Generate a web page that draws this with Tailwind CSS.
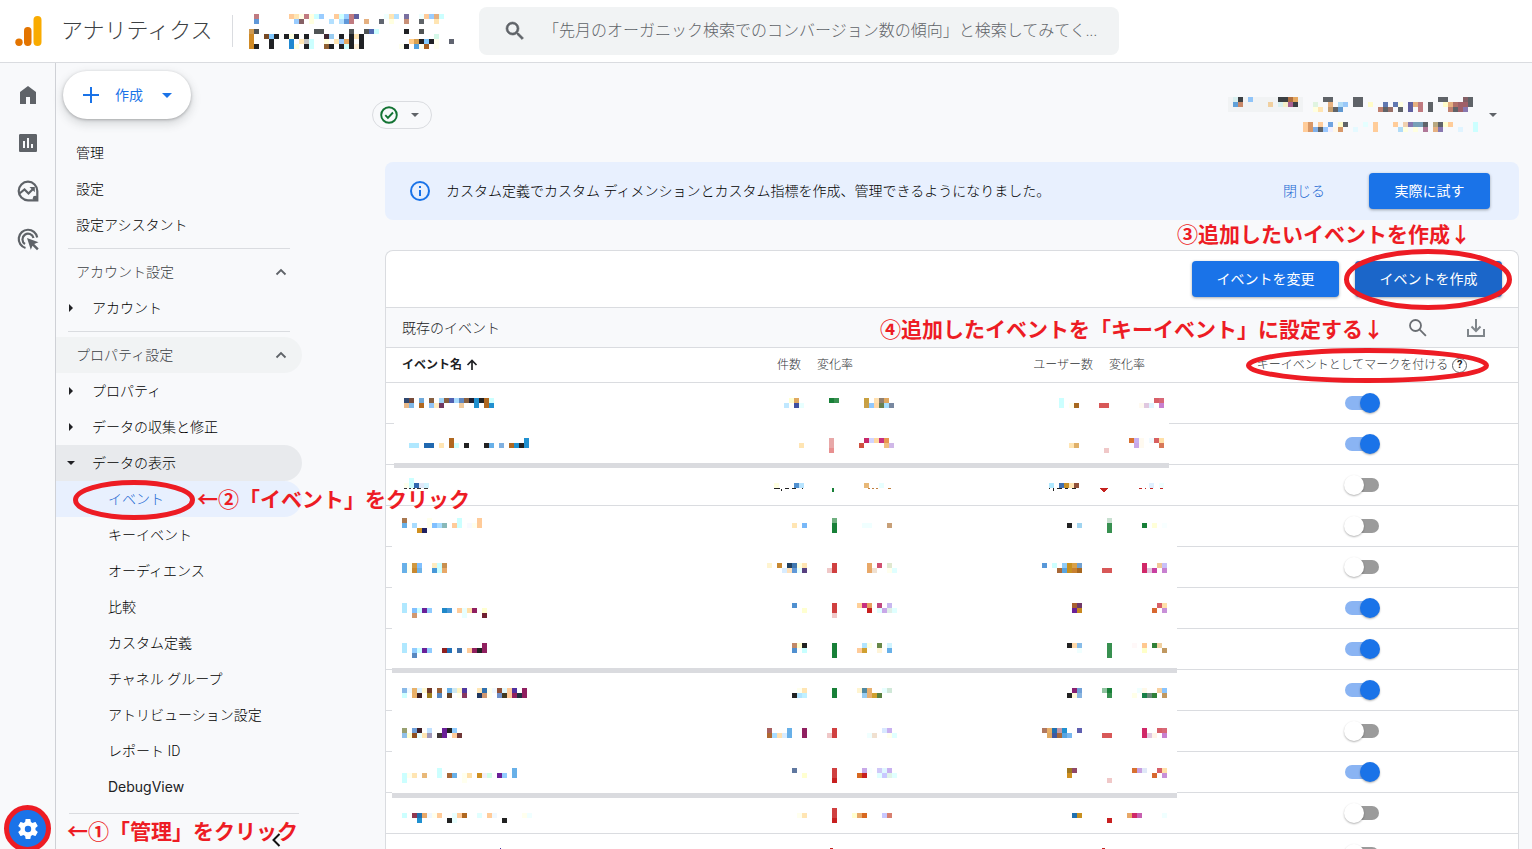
<!DOCTYPE html>
<html lang="ja">
<head>
<meta charset="utf-8">
<title>アナリティクス</title>
<script src="https://cdn.jsdelivr.net/npm/@tailwindcss/browser@4"></script>
</head>
<body class="flex h-screen flex-col overflow-hidden bg-[#f8f9fb] font-['Roboto','Noto_Sans_CJK_JP',sans-serif] text-sm text-[#202124]">

<header class="flex h-[63px] shrink-0 items-center border-b border-[#dadce0] bg-white">
  <svg class="ml-[14px] size-8 shrink-0" viewBox="0 0 32 32" aria-hidden="true">
    <rect x="19.500" y="1" width="8" height="30" rx="4" fill="#f9ab00"/>
    <rect x="10" y="12" width="7.500" height="19" rx="3.700" fill="#e37400"/>
    <circle cx="5" cy="27.300" r="3.700" fill="#e37400"/>
  </svg>
  <h1 class="ml-[15px] w-[155px] text-[22px] leading-8 font-light whitespace-nowrap text-[#3c4043]">アナリティクス</h1>
  <div class="ml-4 h-8 w-px bg-[#dadce0]"></div>
  <svg id="account-mosaic" class="ml-4 h-[35px] w-[206px] shrink-0" viewBox="249 13 206 35" shape-rendering="crispEdges" aria-hidden="true"></svg>
  <label class="ml-6 flex h-12 w-[640px] items-center rounded-lg bg-[#f1f3f4]">
    <svg class="ml-6 size-6 shrink-0 fill-[#5f6368] stroke-[#5f6368]" viewBox="0 0 24 24" stroke-width=".6" aria-hidden="true"><path d="M15.500 14h-.79l-.28-.27A6.470 6.470 0 0 0 16 9.500 6.500 6.500 0 1 0 9.500 16c1.610 0 3.090-.59 4.230-1.570l.27.28v.79l5 4.990L20.490 19l-4.990-5zm-6 0C7.010 14 5 11.990 5 9.500S7.010 5 9.500 5 14 7.010 14 9.500 11.990 14 9.500 14z"/></svg>
    <input type="search" aria-label="検索" class="ml-4 min-w-0 flex-1 bg-transparent text-base font-light outline-none placeholder:text-[#5f6368]" placeholder="「先月のオーガニック検索でのコンバージョン数の傾向」と検索してみてく...">
  </label>
</header>

<div class="flex min-h-0 flex-1">
  <nav class="relative z-20 flex w-14 shrink-0 flex-col items-center border-r border-[#cfd1d6] fill-[#5f6368]" aria-label="メイン">
    <a href="#" aria-label="ホーム" class="mt-5"><svg class="size-6" viewBox="0 0 24 24"><path d="M4 21V9l8-6 8 6v12h-6v-7h-4v7z"/></svg></a>
    <a href="#" aria-label="レポート" class="mt-6"><svg class="size-6" viewBox="0 0 24 24"><path d="M19.500 3h-15C3.500 3 3 3.500 3 4.500v15c0 1 .5 1.500 1.500 1.500h15c1 0 1.500-.5 1.500-1.500v-15c0-1-.5-1.500-1.500-1.500zM9 17H7v-7h2v7zm4 0h-2V7h2v10zm4 0h-2v-4h2v4z"/></svg></a>
    <a href="#" aria-label="探索" class="mt-6"><svg class="size-6" viewBox="0 0 24 24"><path fill="none" stroke="#5f6368" stroke-width="2.200" d="M12 21.300a9.300 9.300 0 1 1 9.300-9.300v9.300z"/><path fill="none" stroke="#5f6368" stroke-width="2.200" d="M3.500 14.500 8.500 10.500l4 4 5-5"/><path d="M13.500 8h5.300v5.300z"/><circle cx="19.200" cy="19.200" r="2.400"/></svg></a>
    <a href="#" aria-label="広告" class="mt-6"><svg class="size-6" viewBox="0 0 24 24"><g fill="none" stroke="#5f6368" stroke-width="2.200"><path d="M9.500 21A9.300 9.300 0 1 1 21.200 10.500"/><path d="M9 17A5.600 5.600 0 1 1 17.500 11"/></g><path d="M11 11l11.500 4.200-4.300 1.900 4.500 4.500-1.700 1.700-4.500-4.500-1.700 4z"/></svg></a>
    <a href="#" aria-label="管理" class="mt-auto mb-[-3px] flex size-[47px] items-center justify-center rounded-full border-[5px] border-[#ed1c24] bg-[#1a73e8]">
      <svg class="size-6 fill-white" viewBox="0 0 24 24"><path d="M19.430 12.980c.04-.32.07-.64.07-.98s-.03-.66-.07-.98l2.110-1.650c.19-.15.24-.42.12-.64l-2-3.460c-.12-.22-.39-.3-.61-.22l-2.490 1c-.52-.4-1.080-.73-1.690-.98l-.38-2.650A.49.490 0 0 0 14 2h-4c-.25 0-.46.180-.49.420l-.38 2.650c-.61.250-1.170.590-1.690.980l-2.490-1c-.23-.09-.49 0-.61.220l-2 3.460c-.13.220-.07.490.12.640l2.110 1.650c-.04.320-.07.650-.07.980s.03.660.07.980l-2.110 1.650c-.19.150-.24.420-.12.640l2 3.460c.12.220.39.300.61.220l2.490-1c.52.400 1.080.730 1.690.980l.38 2.650c.03.240.24.420.49.420h4c.25 0 .46-.18.49-.42l.38-2.650c.61-.25 1.170-.59 1.690-.98l2.490 1c.23.090.49 0 .61-.22l2-3.460c.12-.22.07-.49-.12-.64l-2.110-1.650zM12 15.200a3.200 3.200 0 1 1 0-6.400 3.200 3.200 0 0 1 0 6.400z"/></svg>
    </a>
  </nav>

  <aside class="relative z-10 w-[316px] shrink-0">
    <button class="mt-2 ml-[7px] flex h-12 w-32 items-center rounded-full bg-white text-[#1a73e8] shadow-[0_1px_3px_rgba(60,64,67,.35),0_4px_8px_2px_rgba(60,64,67,.15)]">
      <svg class="ml-4 size-6" viewBox="0 0 24 24" aria-hidden="true"><path d="M12 4v16M4 12h16" stroke="currentColor" stroke-width="2"/></svg>
      <span class="ml-3">作成</span>
      <svg class="ml-3 size-6" viewBox="0 0 24 24" aria-hidden="true"><path fill="currentColor" d="M7 10l5 5 5-5z"/></svg>
    </button>
    <ul class="mt-4 w-[246px] leading-9 font-light text-black [&_a]:block [&_a]:rounded-r-full">
      <li><a href="#" class="pl-5">管理</a></li>
      <li><a href="#" class="pl-5">設定</a></li>
      <li><a href="#" class="pl-5">設定アシスタント</a></li>
      <li class="my-[5px] mr-3 ml-3 h-px bg-[#dadce0]"></li>
      <li><button class="flex h-9 w-full items-center justify-between rounded-r-full pr-[13px] pl-5 text-[#3c4043]">アカウント設定<svg class="size-4" viewBox="0 0 16 16"><path d="M3.500 10.500 8 6l4.500 4.500" fill="none" stroke="#5f6368" stroke-width="1.800"/></svg></button></li>
      <li><a href="#" class="relative pl-9 before:absolute before:top-[14px] before:left-[13px] before:border-4 before:border-r-0 before:border-transparent before:border-l-[#202124]">アカウント</a></li>
      <li class="my-[5px] mr-3 ml-3 h-px bg-[#dadce0]"></li>
      <li><button class="flex h-9 w-full items-center justify-between rounded-r-full bg-[#f1f3f4] pr-[13px] pl-5 text-[#3c4043]">プロパティ設定<svg class="size-4" viewBox="0 0 16 16"><path d="M3.500 10.500 8 6l4.500 4.500" fill="none" stroke="#5f6368" stroke-width="1.800"/></svg></button></li>
      <li><a href="#" class="relative pl-9 before:absolute before:top-[14px] before:left-[13px] before:border-4 before:border-r-0 before:border-transparent before:border-l-[#202124]">プロパティ</a></li>
      <li><a href="#" class="relative pl-9 before:absolute before:top-[14px] before:left-[13px] before:border-4 before:border-r-0 before:border-transparent before:border-l-[#202124]">データの収集と修正</a></li>
      <li><a href="#" class="relative bg-[#e8eaed] pl-9 before:absolute before:top-4 before:left-[11px] before:border-4 before:border-b-0 before:border-transparent before:border-t-[#202124]">データの表示</a></li>
      <li class="relative">
        <a href="#" class="bg-[#e8f0fe] pl-[52px] text-[#1967d2]">イベント</a>
        <svg class="absolute top-[-1px] left-[17px] h-10 w-[122px]" viewBox="0 0 122 40" aria-hidden="true"><ellipse cx="61" cy="20" rx="58.500" ry="17.500" fill="none" stroke="#ed1c24" stroke-width="5"/></svg>
        <strong class="absolute top-px left-[141px] text-[21px] font-bold whitespace-nowrap text-[#ed1c24]">←②「イベント」をクリック</strong>
      </li>
      <li><a href="#" class="pl-[52px]">キーイベント</a></li>
      <li><a href="#" class="pl-[52px]">オーディエンス</a></li>
      <li><a href="#" class="pl-[52px]">比較</a></li>
      <li><a href="#" class="pl-[52px]">カスタム定義</a></li>
      <li><a href="#" class="pl-[52px]">チャネル グループ</a></li>
      <li><a href="#" class="pl-[52px]">アトリビューション設定</a></li>
      <li><a href="#" class="pl-[52px]">レポート ID</a></li>
      <li><a href="#" class="pl-[52px] font-['Inter',sans-serif] font-normal text-[#202124]">DebugView</a></li>
    </ul>
    <div class="relative mt-2 ml-[13px] w-[230px] border-t border-[#dadce0]">
      <strong class="absolute top-0 left-[-2px] text-[21px] leading-9 whitespace-nowrap text-[#ed1c24]">←①「管理」をクリック</strong>
      <button class="absolute top-[18px] left-[201px]" aria-label="メニューを閉じる"><svg class="h-4 w-3" viewBox="0 0 12 16"><path d="M9.500 2 3.500 8l6 6" fill="none" stroke="#111" stroke-width="2"/></svg></button>
    </div>
  </aside>

  <main class="min-w-0 flex-1">
    <div class="flex h-[99px] items-center justify-between pt-[5px] pr-[35px]">
      <button class="flex h-7 w-[60px] items-center rounded-full border border-[#dadce0]" aria-label="データの状態">
        <svg class="ml-[6px] size-5" viewBox="0 0 20 20"><circle cx="10" cy="10" r="7.800" fill="none" stroke="#137333" stroke-width="1.900"/><path d="M6.300 10.200 8.900 12.800 14 7.500" fill="none" stroke="#137333" stroke-width="1.900"/></svg>
        <span class="ml-3 border-x-4 border-t-4 border-transparent border-t-[#5f6368]"></span>
      </button>
      <button class="flex items-center" aria-label="プロパティを選択">
        <svg id="property-mosaic" class="h-9 w-[251px]" viewBox="1228 97 251 36" shape-rendering="crispEdges"><path fill="#f1f3f4" d="M1228 97h75v15h-75z"/></svg>
        <span class="ml-[10px] border-x-4 border-t-4 border-transparent border-t-[#5f6368]"></span>
      </button>
    </div>

    <div class="px-[13px]">
      <section class="relative flex h-[58px] items-center rounded-lg bg-[#e8f0fe] pr-[29px] pl-[23px]">
        <svg class="size-6" viewBox="0 0 24 24" aria-hidden="true"><circle cx="12" cy="12" r="9" fill="none" stroke="#1a73e8" stroke-width="2"/><path d="M11 7h2v2h-2zM11 11h2v6h-2z" fill="#1a73e8"/></svg>
        <p class="ml-[14px] leading-5 font-light text-black">カスタム定義でカスタム ディメンションとカスタム指標を作成、管理できるようになりました。</p>
        <button class="mr-[44px] ml-auto font-light text-[#1967d2]">閉じる</button>
        <button class="h-9 w-[121px] rounded bg-[#1a73e8] text-white shadow-[0_1px_3px_rgba(60,64,67,.45)]">実際に試す</button>
        <strong class="absolute top-[57px] right-[48px] text-[21px] leading-8 whitespace-nowrap text-[#ed1c24]">③追加したいイベントを作成↓</strong>
      </section>

      <section class="mt-[30px] rounded-t-lg border border-b-0 border-[#dadce0] bg-white">
        <div class="flex h-[57px] items-center justify-end gap-4 border-b border-[#dadce0] pr-4">
          <button class="h-9 w-[147px] rounded bg-[#1a73e8] text-white shadow-[0_1px_3px_rgba(60,64,67,.45)]">イベントを変更</button>
          <div class="relative">
            <button class="h-9 w-[147px] rounded bg-[#1b66c9] text-white shadow-[0_1px_3px_rgba(60,64,67,.45)]">イベントを作成</button>
            <svg class="absolute top-[-12px] left-[-11px] z-10 h-[61px] w-[168px]" viewBox="0 0 168 61" aria-hidden="true"><ellipse cx="84" cy="30.500" rx="81.500" ry="28" fill="none" stroke="#ed1c24" stroke-width="5"/></svg>
          </div>
        </div>
        <div class="relative flex h-10 items-center border-b border-[#dadce0] bg-[#f8f9fb] pr-[30px] pl-4 text-[#202124]">
          <h2 class="font-light">既存のイベント</h2>
          <strong class="absolute top-1 right-[134px] text-[21px] leading-9 whitespace-nowrap text-[#ed1c24]">④追加したイベントを「キーイベント」に設定する↓</strong>
          <button class="mr-[34px] ml-auto" aria-label="検索"><svg class="size-6" viewBox="0 0 24 24"><circle cx="9.500" cy="9.500" r="5.500" fill="none" stroke="#6a6e73" stroke-width="1.800"/><path d="m13.700 13.700 6.200 6.200" stroke="#6a6e73" stroke-width="1.800"/></svg></button>
          <button aria-label="ダウンロード"><svg class="size-6" viewBox="0 0 24 24"><path d="M4 13v7h16v-7M12 3v11M7.500 10.500 12 15l4.500-4.500" fill="none" stroke="#80868b" stroke-width="2"/></svg></button>
        </div>
        <div class="relative">
          <table class="w-full table-fixed border-separate border-spacing-0 [&_td]:border-b [&_td]:border-[#dadce0] [&_th]:border-b [&_th]:border-[#dadce0]">
            <thead>
              <tr class="h-[35px] text-xs leading-4 text-[#303336]">
                <th class="w-[302px] pl-4 text-left font-bold text-[#202124]"><span class="flex items-center gap-1">イベント名<svg class="size-3" viewBox="0 0 12 12"><path d="M6 11V2M1.500 6 6 1.500 10.500 6" fill="none" stroke="#202124" stroke-width="1.700"/></svg></span></th>
                <th class="w-[121px] pr-2 text-right font-light">件数</th>
                <th class="w-[172px] pl-2 text-left font-light">変化率</th>
                <th class="w-[120px] pr-2 text-right font-light">ユーザー数</th>
                <th class="w-[105px] pl-2 text-left font-light">変化率</th>
                <th class="font-light">
                  <span class="relative inline-flex items-center gap-1 align-middle">キーイベントとしてマークを付ける
                    <span class="flex size-[15px] items-center justify-center rounded-full border border-[#5f6368] text-[11px] font-bold text-[#202124]">?</span>
                    <svg class="absolute top-[-9px] left-[-11px] h-[35px] w-[243px]" viewBox="0 0 243 35" aria-hidden="true"><ellipse cx="121.500" cy="17.500" rx="119" ry="15" fill="none" stroke="#ed1c24" stroke-width="5"/></svg>
                  </span>
                </th>
              </tr>
            </thead>
            <tbody id="events"></tbody>
          </table>
          <svg id="table-mosaic" class="pointer-events-none absolute top-0 left-0 h-[501px] w-[800px]" viewBox="386 348 800 501" shape-rendering="crispEdges" aria-hidden="true">
            <path fill="#fff" d="M394 388h775v80H394zM392 508h785v290H392z"/>
            <path fill="#dadbdf" d="M394 463h775v5H394zM392 668h785v5H392zM392 793h785v5H392z"/>
          </svg>
        </div>
      </section>
    </div>
  </main>
</div>

<template id="event-row">
  <tr class="h-[41px]">
    <td></td><td></td><td></td><td></td><td></td>
    <td class="text-center"><input type="checkbox" role="switch" aria-label="キーイベントとしてマークを付ける" class="relative block mx-auto h-5 w-9 appearance-none before:absolute before:top-[3px] before:left-px before:h-[14px] before:w-[34px] before:rounded-full before:bg-[#9b9b9b] after:absolute after:top-0 after:left-0 after:size-5 after:rounded-full after:bg-white after:shadow-[0_1px_2px_rgba(0,0,0,.3)] checked:before:bg-[#8ab4f3] checked:after:left-4 checked:after:bg-[#1a73e8]"></td>
  </tr>
</template>

<script>
  const rowTemplate = document.getElementById('event-row');
  for (const flag of '110001110100') {
    const row = rowTemplate.content.cloneNode(true);
    row.querySelector('input').checked = flag === '1';
    document.getElementById('events').append(row);
  }

  // Pixelated blocks: [x, y, rows], rows parted by "/", each cell "column#colour" on a 5px grid.
  function mosaic(id, blocks) {
    const svg = document.getElementById(id);
    for (const [x, y, rows] of blocks) {
      rows.split('/').forEach((line, r) => {
        for (const cell of line.trim().split(' ').filter(Boolean)) {
          const [col, fill] = cell.split('#');
          const rect = document.createElementNS('http://www.w3.org/2000/svg', 'rect');
          rect.setAttribute('x', x + col * 5);
          rect.setAttribute('y', y + r * 5);
          rect.setAttribute('width', 5);
          rect.setAttribute('height', 5);
          rect.setAttribute('fill', '#' + fill);
          svg.append(rect);
        }
      });
    }
  }

  mosaic('account-mosaic', [[249, 13,
    '1#c07a80 8#ffcb99 9#ffe5b3 10#ffffe5 11#c07a80 12#ffffe0 13#ccffff 14#99ccff 17#ffcb99 18#ccffff 19#99ccff 20#c07a80 21#6060a0 27#efffff 28#ffe5b3 29#b3e0ff 31#7a70a0 34#eeffff 35#ffcb99 36#99ccff 37#e5b080 38#ccffff/' +
    '1#6098d8 9#99ccff 10#856065 12#ffffe0 16#b3e0ff 18#b3e0ff 19#6098d8 20#c07a80 23#e5b080 26#606570 28#ffffe0 31#c89078 34#606468 37#ffe5b3//' +
    '0#d09a50 1#505455 13#505455 14#505455 20#505455 23#505455 24#5068b0 25#ccffff 31#202124 34#505455/' +
    '0#d08a25 3#784a25 4#80c8ff 5#202124 7#202124 8#ffffe0 9#202124 11#202124 15#402830 16#99ccf0 18#202124 20#202124 21#ffe5b3 22#202124 37#d5f8e8/' +
    '0#d08a25 4#202124 8#2088d0 10#ffe5b3 11#c4c4c4 12#ccffff 15#ffffe0 17#ffe5b3 18#99ccff 19#e5a860 20#202124 22#202124 32#ffcb88 33#d8a050 34#202124 35#80c8ff 36#202124 37#ffffee 40#606470/' +
    '0#d08a25 1#202124 4#202124 8#2088d0 9#ffffe0 11#202124 12#ccffff 15#906030 16#202124 18#202124 19#ccffff 20#202124 21#fff0d8 22#202124 30#ffffee 31#202124 33#50a0e0 34#ffffee 35#a86020 37#ffffee']]);

  mosaic('property-mosaic', [[1228, 97,
    '1#d8f0f0 2#3c4043 4#90c4f8 10#3c4043 11#3c4043 12#b07040 13#e5a860 19#5f6368 20#5f6368 25#5f6368 26#5f6368 42#5f6368 43#5f6368 47#856065 48#5f6368/' +
    '1#60a0d8 2#c88868 8#f0d0a0 10#d8f0f0 11#f5efc8 12#a86090 13#3c4043 17#e0f4e0 20#e5b080 22#b0dcf8 23#99c8f8 25#5f6368 26#5f6368 28#fffcc8 31#6078b0 33#6078b0 34#ffffe0 36#6060a0 37#e5b080 38#c07a80 40#5f6368 43#fffcc8 44#e5b080 45#b07068 46#a06068 47#a06068 48#5f6368/' +
    '17#ffffe0 18#ffe5b3 20#c8a070 21#5f6368 22#6098d0 30#c08070 31#5f6368 32#987068 34#5f6368 36#6060a0 38#c07a80 40#5f6368 44#c08070 45#5f6368 46#a06068 47#8878b0'],
    [1228, 122,
    '15#ffcc99 16#d89868 18#ffcc99 20#70a4e0 22#fffcc8 23#5f6368 27#e5ffff 29#ffcc99 33#ffcc99 35#f0d0b0 36#8878b0 37#78a0b8 38#78a0b8 39#5f6368 41#b8a880 42#5f6368 43#ffffd0 44#ffcc99 49#ccffff/' +
    '15#ffcc99 16#d89868 17#80b0e8 18#5f6368 19#99c8ff 20#f0f0ff 21#fff8e8 22#d89868 25#e5faff 29#ffcc99 34#b0dcf8 35#ffffe0 37#ffffe0 39#b07898 41#e5b080 42#8878b0 46#e0f4ff 49#ccffff']]);

  mosaic('table-mosaic', [
    // Event names
    [404, 398, '0#304870 1#784a38 3#70a8d8 5#886040 7#a0d4f8 8#886040 9#5060b0 10#a8dcff 11#6088c0 12#886040 13#202030 14#2090d0 15#222222 16#b06820 17#ccffff/0#e8b888 1#80b8e8 3#b06820 5#90c4f8 6#ffecc0 7#703860 11#f0cca0 14#2090d0 16#b06820 17#2090d0'],
    [404, 438, '9#b06820 24#2090d0/1#b0e8ff 2#b0e8ff 4#2068b0 5#2068b0 7#ffe5b3 9#b06820 10#ccffff 12#222222 16#222222 17#68b0e8 19#80b0e0 21#b06820 22#2090d0 23#222222 24#2090d0'],
    [404, 478, '1#ccffff/0#ffffee 1#ccffff 2#3068b0 3#e0e8f8 4#d0f4ff'],
    [402, 518, '0#a87850 5#ffffee 11#ccffff 15#ffcb99/0#68b0e8 2#a8dcff 5#ffffee 6#80c0ff 7#a8dcff 8#88b8b8 10#ffcb99 11#ccffff 13#f8faff 14#ffffee 15#ffcb99/3#d09020 4#202060'],
    [402, 563, '0#68b0e8 1#ffffee 2#d09840 3#80c0ff 6#ffecc0 7#ccffff 8#c89050/0#68b0e8 1#ffffee 2#c88830 3#70b4e8 6#4898d8 7#ccffff 8#e8a868'],
    [402, 603, '0#b0e8ff/0#b0e8ff 2#80c0ff 3#ccffff 4#6a2098 5#90ccff 8#2088c8 9#4898d8 11#ffcb99 12#e8ffff 13#ffe0a8 14#902060 16#ffffd0/2#d09870 12#e8ffff 16#702030'],
    [402, 643, '0#b0e8ff 16#902060/0#b0e8ff 2#90ccff 3#ccffff 4#6a2098 5#90ccff 8#902020 9#2070b8 11#4070a8 13#ffcb99 14#902060 15#222222 16#902060/2#5888c0'],
    [402, 688, '0#88b8e8 1#f0faff 2#e8b068 3#d8f0ff 4#fff8d0 5#703828 7#986038 9#68b0e8 10#d0e8f0 11#fff4c0 12#5038a0 15#ffe5b3 16#3070b0 17#ffffee 18#f0f8ff 19#905038 20#e0f8ff 21#ffcb99 22#5030a0 24#902060/0#ccffff 2#e8b068 3#402020 5#a08020 7#5888c0 9#604028 11#fffff0 12#883860 15#203860 16#d09870 17#fffff0 19#7090c8 20#403820 21#ffcb99 22#902060 23#203040 24#902060'],
    [402, 728, '0#98a070 2#70a0d8 3#402028 5#c0e0ff 8#6a2098 9#222222 10#90ccff/0#90c0e8 1#ffffd0 2#905020 3#e8ffff 4#ffe5b3 5#a098b8 7#403838 8#6a2098 10#ffcb99 11#703838'],
    [402, 768, '7#ccffff 22#68b0e8/0#ccffff 1#ffffee 2#ffe5b3 4#e8b878 7#ccffff 9#a86838 10#68b0e8 12#ffffee 13#ffe0a8 15#d09020 16#f0f0f8 17#d0ffe8 19#6a2098 20#90ccff 22#68b0e8/0#ccffff 12#ffffee'],
    [402, 813, '0#ccffff 2#903850 3#2070b0 4#e8a868 5#f0f8ff 6#ffffee 7#ffcb99 10#e8ffff 11#ffcb99 12#b06820 15#e0ffff 17#ffcb99 18#f0f8ff 24#ffffee 25#f0ffff/3#2090d0 9#222222 10#e8ffff 20#222222'],
    // Counts and their change
    [784, 398, '1#ffffd0 2#e0a860 9#188038 10#389050 16#c8a040 18#ffe0b0 19#908070 20#e0a860/0#c0e8ff 2#4050a0 3#e8ffff 16#c8a048 17#90c8ff 18#ffd8a8 19#688050 20#a8e0ff 21#7888a0'],
    [784, 438, '9#e8a8a8 16#c82868 17#d0d4ff 18#ffd8a0 19#c83080 20#e89850/3#ffe5b3 9#e8a8a8 15#d05040 20#f0c080 21#d0b8e8/9#e89090'],
    [774, 483, '0#ffffe0 4#5090d0 5#b8e4ff 18#e8b878 21#e8ffff'],
    [767, 518, '13#70b080/5#ffe5b3 7#78b8f8 13#188038 19#f0ffff 20#f0ffff 24#c8a078/13#188038'],
    [767, 563, '0#fff4d0 2#c88830 4#204060 5#4078b0 6#ffffe0 7#ffe5b3 13#d04040 20#e8a868 22#d05070 24#e0e8d0/3#d8ecff 4#ffe0b8 5#6098d8 6#e8ffff 7#584080 12#f0c8c8 13#d04040 20#e8a868 21#f0e0d0 24#ffffee 25#e0ffff'],
    [767, 603, '5#5090d0 13#d04040 18#ffd098 19#c83080 20#e8a060 22#c04880 24#c8b8f0/7#ffffd0 13#d04040 20#c82020 22#e0ffff 23#c8a8e8 24#e0f0e8 25#e0ffff/13#f0c8c8'],
    [767, 643, '5#c08868 6#ffffd0 7#222222 13#188038 19#b0e4ff 20#ffffe0 22#688848 24#d0f4ff/5#5090d0 7#c8ffff 13#188038 18#ffcb99 19#d0a030 22#fff4d8 24#68b0e8/13#188038'],
    [767, 688, '6#ffffee 7#ffe5b3 13#188038 18#fff4d0 19#5088a0 20#e8b070 23#e8ffff 24#d0e8d8/5#222222 6#b0e4ff 7#c0f0ff 13#188038 19#98ccf0 20#e8b070 21#d0a030 22#588040'],
    [767, 728, '0#a86060 4#68b0e8 7#902060 13#d04040 23#d8e8ff 24#c8b0f0/0#b06830 1#a8dcff 2#ffe0b0 3#d8ecff 4#68b0e8 7#902060 12#f0c8c8 13#d04040 20#f0ffff 21#f0e0d0 24#ffffee 25#e0ffff'],
    [767, 768, '5#6078a0 13#d04040 19#c8a8e8 20#f8ffff 22#d0c8f8 23#e0f8ff 24#c8b0f0/7#ffffd0 13#d04040 18#d86820 19#c82020 22#e0ffff 23#c8c8ff 24#e0f4e8 25#e0ffff/13#c82020'],
    [767, 808, '13#d04040/6#ffffee 7#ffe5b3 13#d04040 17#ffffd0 18#e8a868 19#d86820 23#c8c8ff 24#d88070/13#c82020'],
    // Users and their change
    [1059, 398, '0#ccffff 19#d86068 20#d86878/0#ccffff 2#ffffee 3#a86820 8#d85858 9#d85858 16#fffaf0 17#e0c8e0 18#e0f4ff 20#c880d0'],
    [1059, 438, '14#d87030 15#c8b0f0 16#fffaf0 18#f0faff 19#d86060 20#ffe0a8/2#ffe5b3 3#e0b068 15#c8a8e8 16#fffaf0 20#d87858/9#f0c8c8'],
    [1049, 483, '0#b0e8ff 2#4070b0 3#c89028 4#ffe5b3 5#905038 20#e0f0ff 22#f0ffff'],
    [1042, 518, '13#c8e0d0/5#222222 7#a0d4f0 13#389050 20#188038 22#ffffd8 24#f8ffff/13#389050'],
    [1042, 563, '0#5898d8 2#ccffff 4#90ccf8 5#c89020 6#d8a048 7#70a0d0 20#d02868 23#f0c898 24#c8c0f8/3#a86838 4#58a4e0 5#c89020 6#c88030 7#a86820 12#d85858 13#d85858 20#d02868 21#e0c8e0 22#c840a0 24#c880d0'],
    [1042, 603, '6#a86030 7#703868 23#d86068 24#ffe0a8/6#6a2098 7#c88820 22#d86830 24#c890d8'],
    [1042, 643, '5#222222 6#ffd8a8 7#88bce8 13#389050 18#fff8f8 20#ffc890 22#308038 23#f0d0a0/7#f0ffff 13#389050 20#ffffc8 24#c09860/13#389050'],
    [1042, 688, '6#882070 7#70a0d8 12#90c4a0 13#188038 19#f0ffff 20#fff8e8 23#f8d0a0 24#88c4ff/5#222222 6#fff8d8 7#88b4e0 13#389050 18#ffffe8 20#188048 21#688878 22#308038 24#c09860'],
    [1042, 728, '0#b07860 1#e8b068 2#2070b0 3#c098a8 4#2090d0 7#6060b0 20#d02868 23#d86068 24#d86878/1#e0a860 2#4058a0 3#a86838 4#58a4e0 5#78b8f0 12#d85858 13#d85858 20#d02868 21#e0c8e0 22#fff4e8 24#c880d0'],
    [1042, 768, '5#a07820 6#904868 18#d87030 19#c8a0e0 20#e0e8f8 23#d86068 24#ffe0a8/5#d09020 22#d86830 24#c890d8/13#f0c8c8'],
    [1042, 808, '/6#2070b0 7#c89020 17#e8a868 18#d02868 19#c860b0 24#f0ffff/13#c82020']
  ]);

  // Lower edges of the characters that the pixelation leaves visible.
  const edges = [
    ['#333333', 'M404 488h3v1h-3zM409 488h2v1h-2zM413 488h2v1h-2zM417 488h4v1h-4zM424 488h4v1h-4z'],
    ['#222222', 'M774 488h6v1h-6zM781 489h1v2h-1zM785 488h4v1h-4zM792 488h4v1h-4zM802 488h1v1h-1z'],
    ['#c08040', 'M868 488h2v1h-2zM872 488h2v1h-2zM876 488h2v1h-2zM888 488h3v1h-3z'],
    ['#188038', 'M832 488h2v4h-2z'],
    ['#222222', 'M1049 488h1v1h-1zM1053 488h1v3h-1zM1057 488h5v1h-5zM1065 488h3v1h-3zM1072 488h4v1h-4z'],
    ['#c5221f', 'M1100 488h8v1h-1v1h-1v1h-1v1h-2v-1h-1v-1h-1v-1h-1z'],
    ['#c5221f', 'M1139 488h3v1h-3zM1145 488h1v1h-1zM1150 488h3v1h-3zM1160 488h3v1h-3zM830 848h3v1h-3zM1102 848h3v1h-3z'],
    ['#4030a0', 'M500 848h1v1h-1z']
  ];
  for (const [fill, d] of edges) {
    const path = document.createElementNS('http://www.w3.org/2000/svg', 'path');
    path.setAttribute('fill', fill);
    path.setAttribute('d', d);
    document.getElementById('table-mosaic').append(path);
  }
</script>
</body>
</html>
